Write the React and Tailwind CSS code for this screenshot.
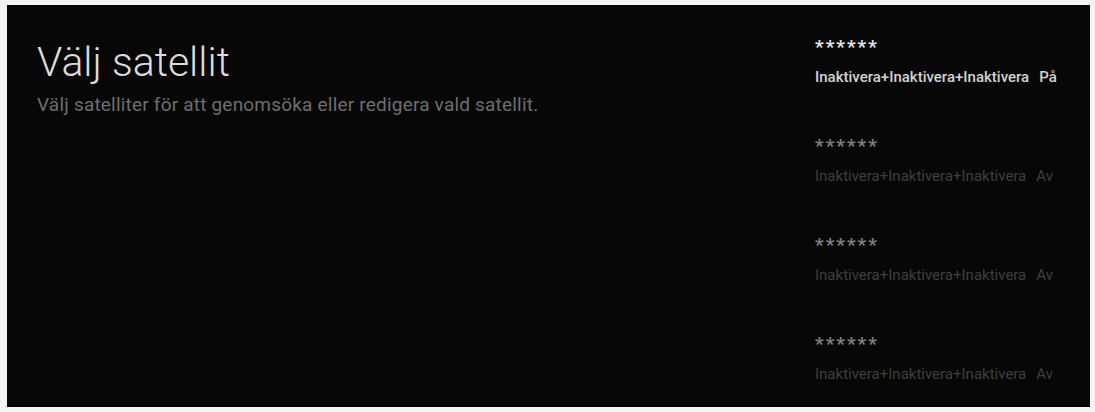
import React from 'react';

const rows = [
    { label: 'Inaktivera+Inaktivera+Inaktivera', state: 'På', active: true },
    { label: 'Inaktivera+Inaktivera+Inaktivera', state: 'Av', active: false },
    { label: 'Inaktivera+Inaktivera+Inaktivera', state: 'Av', active: false },
    { label: 'Inaktivera+Inaktivera+Inaktivera', state: 'Av', active: false },
];

export default function App() {
    return (
        <div className="w-[1095px] h-[412px] bg-[#f4f4f4] pl-[7px] pt-[5px] pr-[5px] pb-[5px]" style={{ fontFamily: 'Roboto, "Noto Sans", sans-serif' }}>
            <div className="w-[1083px] h-[402px] bg-[#070707] flex overflow-hidden">
                <div className="flex-1 pl-[30px] pt-[33px]">
                    <h1 className="text-[41px] font-light text-[#dcdcdc] leading-[48px]">Välj satellit</h1>
                    <p className="text-[19px] tracking-[0.2px] text-[#6e6e6e] mt-[7px] leading-[24px]">Välj satelliter för att genomsöka eller redigera vald satellit.</p>
                </div>
                <div className="w-[275px] pt-[31px] flex flex-col">
                    {rows.map((r, i) => (
                        <div key={i} className="h-[99px] shrink-0">
                            <div className={`text-[19px] font-bold leading-[22px] tracking-[2px] ${r.active ? 'text-[#e4e4e4]' : 'text-[#7e7e7e]'}`}>******</div>
                            <div className={`mt-[10px] text-[15px] leading-[18px] flex gap-[10px] ${r.active ? 'text-[#d2d2d2] font-medium' : 'text-[#3e3e3e]'}`}>
                                <span>{r.label}</span>
                                <span>{r.state}</span>
                            </div>
                        </div>
                    ))}
                </div>
            </div>
        </div>
    );
}
